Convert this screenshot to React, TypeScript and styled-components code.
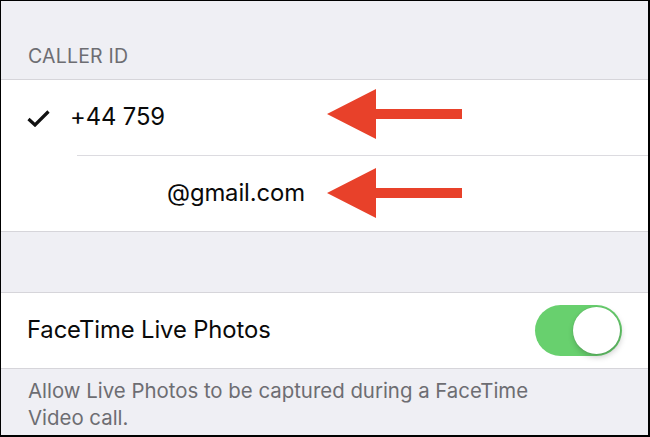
import { FC } from "react";
import styled, { createGlobalStyle } from "styled-components";

const GlobalStyle = createGlobalStyle`
  html, body {
    margin: 0;
    padding: 0;
    background: #000;
  }
  body {
    font-family: Inter, "Liberation Sans", sans-serif;
  }
`;

const Arrow: FC<{ top: number }> = ({ top }) => (
  <ArrowSvg style={{ top }} width="136" height="50" viewBox="0 0 136 50">
    <polygon points="0,25 49,0 49,20 135,20 135,30 49,30 49,50" fill="#e8412a" />
  </ArrowSvg>
);

const Check = () => (
  <svg width="23" height="17" viewBox="0 0 23 17">
    <path
      d="M1.5 9 L8 15 L21.5 1.5"
      fill="none"
      stroke="#111"
      strokeWidth="3.2"
      strokeLinejoin="miter"
    />
  </svg>
);

const App = () => {
  return (
    <>
      <GlobalStyle />
      <Screen>
        <SectionHeader>CALLER ID</SectionHeader>
        <Group>
          <Row>
            <CheckSlot>
              <Check />
            </CheckSlot>
            <RowText>+44 759</RowText>
            <Arrow top={9} />
          </Row>
          <Divider />
          <Row>
            <RowText indent={167}>@gmail.com</RowText>
            <Arrow top={12} />
          </Row>
        </Group>
        <Spacer />
        <Group>
          <Row>
            <RowText indent={27}>FaceTime Live Photos</RowText>
            <Toggle>
              <Knob />
            </Toggle>
          </Row>
        </Group>
        <Footer>
          Allow Live Photos to be captured during a FaceTime
          <br />
          Video call.
        </Footer>
      </Screen>
    </>
  );
};

export default App;

const Screen = styled.div`
  width: 650px;
  height: 437px;
  box-sizing: border-box;
  border-style: solid;
  border-color: #000;
  border-width: 1px 2px 2px 1px;
  background: #efeff4;
  overflow: hidden;
`;

const SectionHeader = styled.div`
  height: 78px;
  box-sizing: border-box;
  padding: 0 0 11px 27px;
  display: flex;
  align-items: flex-end;
  font-size: 19.5px;
  color: #6d6d72;
  letter-spacing: 0.2px;
`;

const Group = styled.div`
  background: #fff;
  border-top: 1px solid #d6d5da;
  border-bottom: 1px solid #d6d5da;
`;

const Row = styled.div`
  position: relative;
  height: 75px;
  display: flex;
  align-items: center;
  padding-right: 24px;
`;

const CheckSlot = styled.div`
  width: 69px;
  padding-left: 26px;
  box-sizing: border-box;
  display: flex;
  align-items: center;
  margin-top: 2px;
`;

const RowText = styled.div<{ indent?: number }>`
  flex: 1;
  padding-left: ${({ indent }) => (indent ? `${indent - 1}px` : "0")};
  font-size: 23.8px;
  color: #0a0a0a;
  letter-spacing: -0.1px;
  margin-top: -2px;
`;

const Divider = styled.div`
  margin-left: 76px;
  height: 1px;
  background: #dcdbe0;
`;

const ArrowSvg = styled.svg`
  position: absolute;
  left: 326px;
`;

const Spacer = styled.div`
  height: 60px;
`;

const Toggle = styled.div`
  width: 87px;
  height: 51px;
  border-radius: 26px;
  background: #68d06e;
  position: relative;
  margin-right: 2px;
`;

const Knob = styled.div`
  position: absolute;
  right: 2px;
  top: 2px;
  width: 47px;
  height: 47px;
  border-radius: 50%;
  background: #fff;
  box-shadow: 1px 3px 6px rgba(0, 0, 0, 0.22), 0 0 0 0.5px rgba(0, 0, 0, 0.08);
`;

const Footer = styled.div`
  padding: 8px 0 0 27px;
  font-size: 20.4px;
  line-height: 27px;
  color: #6d6d72;
`;
